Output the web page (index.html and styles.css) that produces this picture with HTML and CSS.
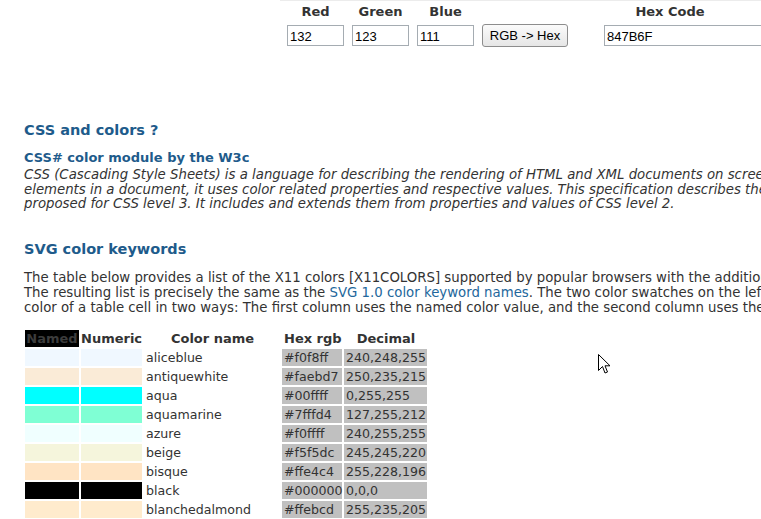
FILE: index.html
```html
<!DOCTYPE html>
<html>
<head>
<meta charset="utf-8">
<title>CSS colors</title>
<link rel="stylesheet" href="styles.css">
</head>
<body>
<div class="page">
  <form class="converter">
    <div class="field">
      <label class="lbl">Red</label>
      <input class="num" type="text" value="132">
    </div>
    <div class="field">
      <label class="lbl">Green</label>
      <input class="num" type="text" value="123">
    </div>
    <div class="field">
      <label class="lbl">Blue</label>
      <input class="num" type="text" value="111">
    </div>
    <div class="field">
      <span class="lbl">&nbsp;</span>
      <button class="btn" type="button">RGB -&gt; Hex</button>
    </div>
    <div class="field hexfield">
      <label class="lbl">Hex Code</label>
      <input class="hex" type="text" value="847B6F">
    </div>
  </form>

  <div class="content">
    <h2 class="h-main first">CSS and colors ?</h2>
    <h3 class="h-sub">CSS# color module by the W3c</h3>
    <p class="intro">
      <span class="ln">CSS (Cascading Style Sheets) is a language for describing the rendering of HTML and XML documents on screen, on paper, in speech, etc. To color</span>
      <span class="ln">elements in a document, it uses color related properties and respective values. This specification describes the color values and properties</span>
      <span class="ln">proposed for CSS level 3. It includes and extends them from properties and values of CSS level 2.</span>
    </p>

    <h2 class="h-main second">SVG color keywords</h2>
    <p class="desc">
      <span class="ln">The table below provides a list of the X11 colors [X11COLORS] supported by popular browsers with the addition of gray/grey variants from SVG 1.0.</span>
      <span class="ln">The resulting list is precisely the same as the <a class="link" href="#">SVG 1.0 color keyword names</a>. The two color swatches on the left illustrate setting the background</span>
      <span class="ln">color of a table cell in two ways: The first column uses the named color value, and the second column uses the respective numeric color value.</span>
    </p>

    <table class="colors">
      <thead>
        <tr>
          <th class="c-named">Named</th>
          <th class="c-num">Numeric</th>
          <th class="c-name">Color name</th>
          <th class="c-hex">Hex rgb</th>
          <th class="c-dec">Decimal</th>
        </tr>
      </thead>
      <tbody>
        <tr><td style="background:aliceblue"></td><td style="background:#f0f8ff"></td><td class="name">aliceblue</td><td class="hexv">#f0f8ff</td><td class="decv">240,248,255</td></tr>
        <tr><td style="background:antiquewhite"></td><td style="background:#faebd7"></td><td class="name">antiquewhite</td><td class="hexv">#faebd7</td><td class="decv">250,235,215</td></tr>
        <tr><td style="background:aqua"></td><td style="background:#00ffff"></td><td class="name">aqua</td><td class="hexv">#00ffff</td><td class="decv">0,255,255</td></tr>
        <tr><td style="background:aquamarine"></td><td style="background:#7fffd4"></td><td class="name">aquamarine</td><td class="hexv">#7fffd4</td><td class="decv">127,255,212</td></tr>
        <tr><td style="background:azure"></td><td style="background:#f0ffff"></td><td class="name">azure</td><td class="hexv">#f0ffff</td><td class="decv">240,255,255</td></tr>
        <tr><td style="background:beige"></td><td style="background:#f5f5dc"></td><td class="name">beige</td><td class="hexv">#f5f5dc</td><td class="decv">245,245,220</td></tr>
        <tr><td style="background:bisque"></td><td style="background:#ffe4c4"></td><td class="name">bisque</td><td class="hexv">#ffe4c4</td><td class="decv">255,228,196</td></tr>
        <tr><td style="background:black"></td><td style="background:#000000"></td><td class="name">black</td><td class="hexv">#000000</td><td class="decv">0,0,0</td></tr>
        <tr><td style="background:blanchedalmond"></td><td style="background:#ffebcd"></td><td class="name">blanchedalmond</td><td class="hexv">#ffebcd</td><td class="decv">255,235,205</td></tr>
      </tbody>
    </table>
  </div>

  <svg class="cursor" width="13" height="21" viewBox="0 0 13 21" xmlns="http://www.w3.org/2000/svg">
    <path d="M0.5 0.5 L0.5 16.5 L4.5 12.5 L7 19 L9.5 18 L7 11.8 L12 11.8 Z" fill="#fff" stroke="#000" stroke-width="1" stroke-linejoin="miter"/>
  </svg>
</div>
</body>
</html>
```
FILE: styles.css
```css
html, body {
  margin: 0;
  padding: 0;
  background: #ffffff;
}

body {
  width: 761px;
  height: 519px;
  overflow: hidden;
  font-family: "DejaVu Sans", Verdana, sans-serif;
  font-size: 12px;
  color: #333333;
}

.page {
  position: relative;
  width: 761px;
  height: 519px;
  overflow: hidden;
}

/* ---------- converter form ---------- */
.converter {
  display: flex;
  align-items: flex-start;
  gap: 8px;
  margin: 0 0 0 280px;
  padding: 3px 0 0 7px;
  border-top: 1px solid #ececec;
  height: 45px;
}

.field {
  display: flex;
  flex-direction: column;
  align-items: center;
  flex: none;
}

.lbl {
  display: block;
  font-weight: bold;
  font-size: 13px;
  line-height: 16px;
  height: 16px;
  color: #333333;
  margin-bottom: 5px;
  white-space: nowrap;
}

.num, .hex {
  box-sizing: border-box;
  height: 21px;
  margin: 0;
  padding: 1px 2px 0;
  border: 1px solid #a5acb2;
  background: #ffffff;
  font-family: "Liberation Sans", Arial, sans-serif;
  font-size: 13px;
  color: #000000;
  outline: none;
}

.num {
  width: 57px;
}

.btn {
  box-sizing: border-box;
  width: 86px;
  height: 23px;
  margin-top: -1px;
  padding: 0;
  border: 1px solid #8d8d8d;
  border-radius: 3px;
  background: linear-gradient(#fbfbfb, #e6e6e6);
  font-family: "Liberation Sans", Arial, sans-serif;
  font-size: 13px;
  color: #000000;
}

.hexfield {
  margin-left: 28px;
  width: 132px;
  align-items: flex-start;
}

.hexfield .lbl {
  align-self: stretch;
  text-align: center;
}

.hex {
  width: 190px;
}

/* ---------- content ---------- */
.content {
  padding-left: 24px;
}

.ln {
  display: block;
  white-space: nowrap;
}

.h-main {
  margin: 0;
  font-size: 14.5px;
  line-height: 18px;
  font-weight: bold;
  color: #1e5b8b;
}

.h-main.first {
  margin-top: 72px;
}

.h-main.second {
  margin-top: 28px;
}

.h-sub {
  margin: 11px 0 0;
  font-size: 13px;
  line-height: 16px;
  font-weight: bold;
  color: #1e5b8b;
}

.intro {
  margin: 2px 0 0;
  font-style: italic;
  font-size: 13.3px;
  line-height: 14.5px;
  color: #333333;
}

.desc {
  margin: 12px 0 0;
  font-size: 13.3px;
  line-height: 15px;
  color: #333333;
}

.link {
  color: #23679c;
  text-decoration: none;
}

/* ---------- color table ---------- */
.colors {
  margin: 13px 0 0 -1px;
  border-collapse: separate;
  border-spacing: 2px;
  table-layout: fixed;
  width: 404px;
  font-size: 12.6px;
  color: #333333;
}

.colors th, .colors td {
  height: 17px;
  padding: 0 1px 0 2px;
  line-height: 17px;
  box-sizing: border-box;
  white-space: nowrap;
  overflow: visible;
}

.colors th {
  font-weight: bold;
  font-size: 13px;
  text-align: center;
  color: #333333;
}

.colors th.c-named {
  width: 54px;
  padding: 0;
  background: #000000;
  color: #3c3c3c;
}

.colors th.c-num {
  width: 61px;
  padding: 0;
}

.colors th.c-name {
  width: 136px;
}

.colors th.c-hex {
  width: 60px;
}

.colors th.c-dec {
  width: 83px;
}

.colors td.name {
  text-align: left;
}

.colors td.hexv, .colors td.decv {
  background: #c0c0c0;
  text-align: left;
}

/* ---------- mouse pointer overlay ---------- */
.cursor {
  position: absolute;
  left: 598px;
  top: 354px;
}
```
